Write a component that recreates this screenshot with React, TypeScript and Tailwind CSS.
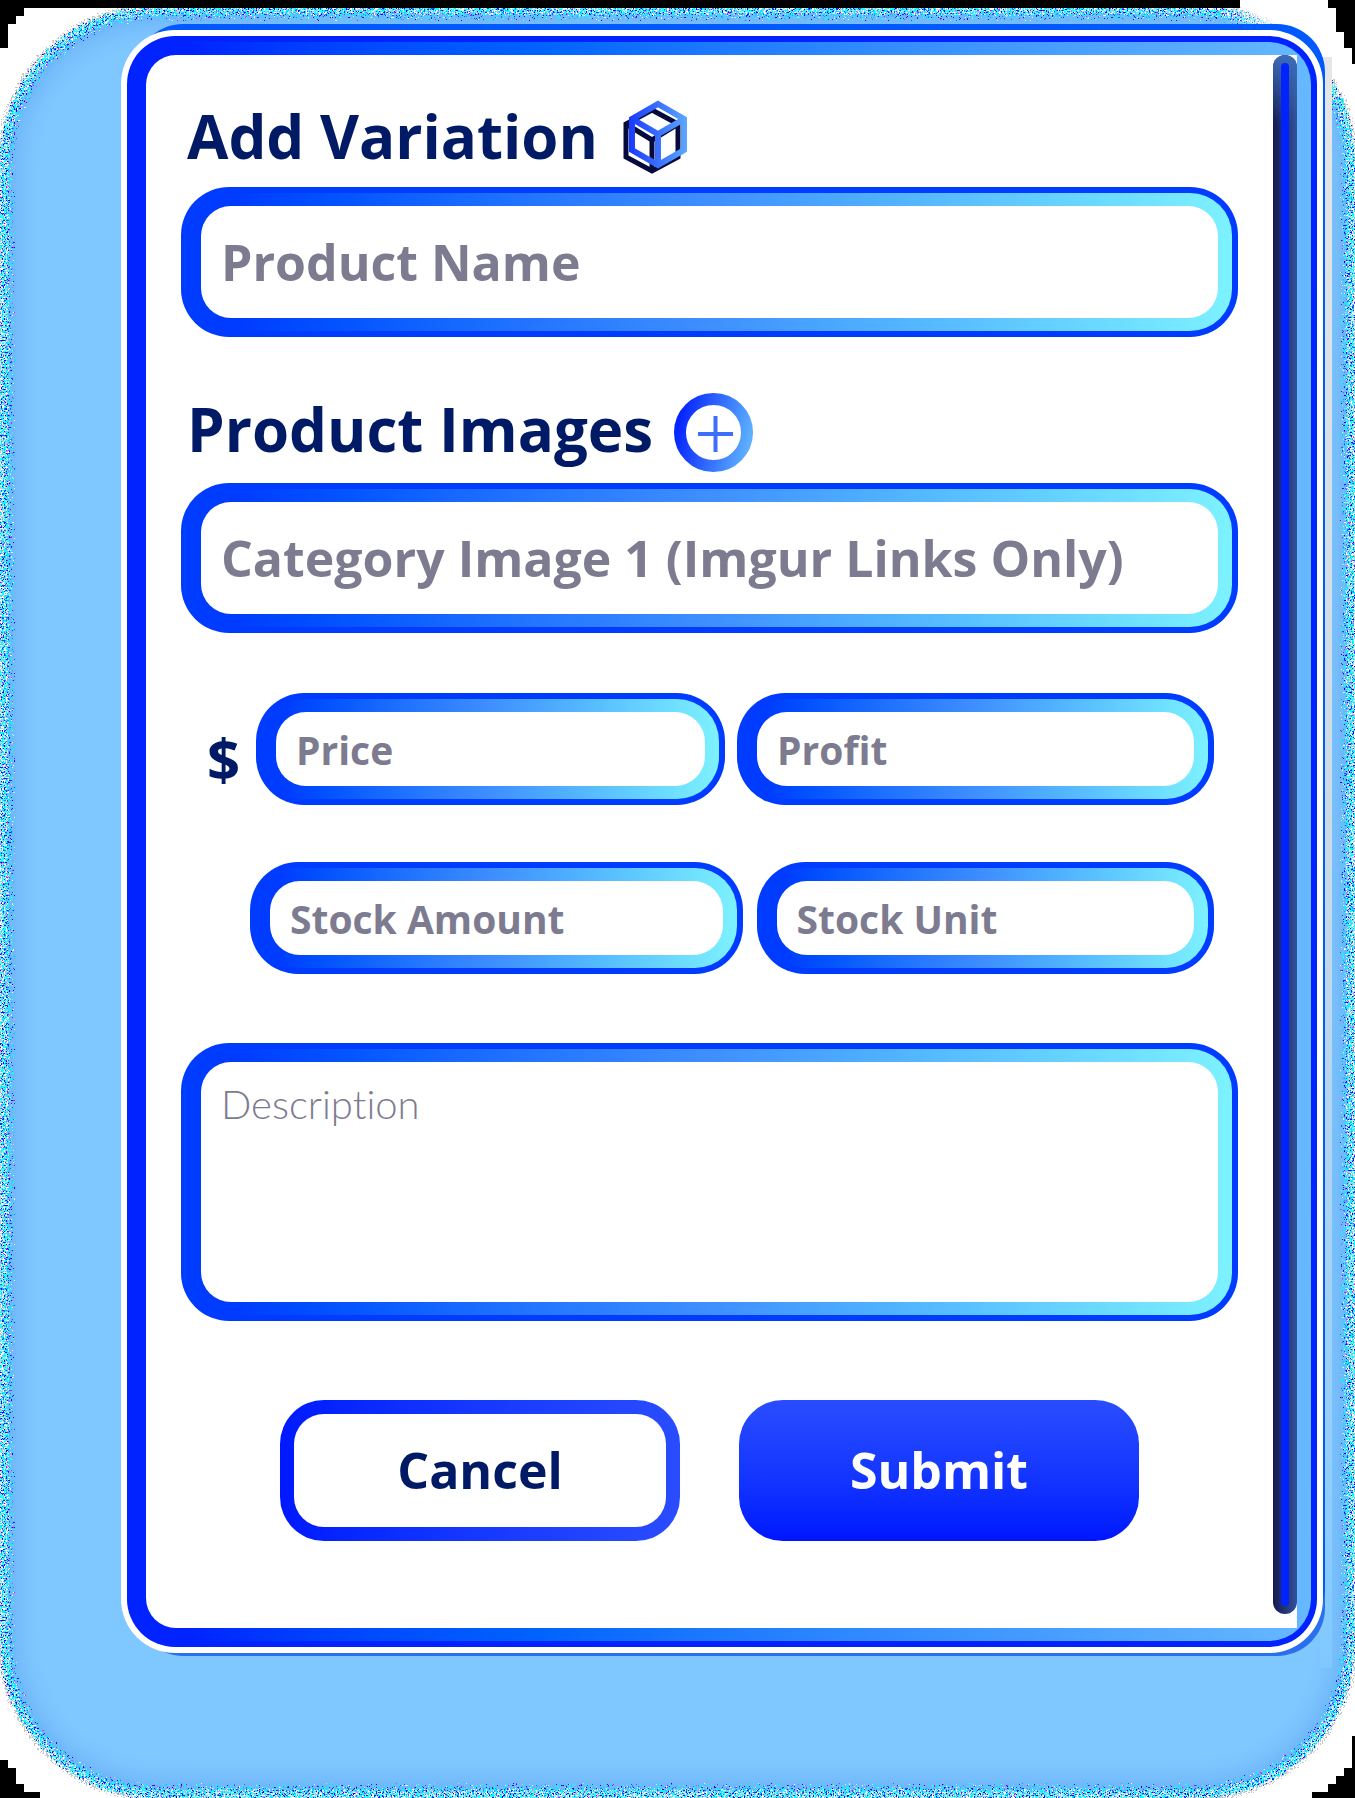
import React from "react";

const fieldText =
  "w-full min-w-0 bg-white px-5 font-['Open_Sans',sans-serif] font-bold text-[#7d7b90] outline-none placeholder:text-[#7d7b90] placeholder:opacity-100";

function Frame({ children, className = "" }: { children: React.ReactNode; className?: string }) {
  return (
    <div className={`min-w-0 rounded-[48px] bg-[#003cff] p-[6px] ${className}`}>
      <div className="rounded-[42px] bg-linear-to-r from-[#003cff] from-5% via-[#3f8fff] via-50% to-[#7df2ff] px-[14px] py-[13px]">
        {children}
      </div>
    </div>
  );
}

function LargeField({ label }: { label: string }) {
  return (
    <Frame>
      <input aria-label={label} placeholder={label} className={`${fieldText} block h-28 rounded-[30px] text-[50px]`} />
    </Frame>
  );
}

function SmallField({ label, className }: { label: string; className: string }) {
  return (
    <Frame className={className}>
      <input aria-label={label} placeholder={label} className={`${fieldText} block h-[74px] rounded-[30px] text-[39px]`} />
    </Frame>
  );
}

function BoxIcon() {
  return (
    <svg viewBox="0 0 66 76" className="h-[76px] w-[66px]" fill="none" aria-hidden="true">
      <defs>
        <linearGradient id="cube" gradientUnits="userSpaceOnUse" x1="8" y1="0" x2="64" y2="0">
          <stop offset="0" stopColor="#1a3dff" />
          <stop offset="1" stopColor="#5ba8ff" />
        </linearGradient>
      </defs>
      <g stroke="#050a3c" strokeWidth="5">
        <path d="M29 10 55 24V57L29 71 3 57V24Z" />
        <path d="M3 24 29 40 55 24M29 40V71" />
      </g>
      <g stroke="url(#cube)" strokeWidth="6">
        <path d="M35 4 61 19V50L35 65 9 50V19Z" />
        <path d="M9 19 35 34 61 19M35 34V65" />
      </g>
    </svg>
  );
}

function PlusIcon() {
  return (
    <svg viewBox="0 0 79 79" className="size-[79px]" fill="none" aria-hidden="true">
      <defs>
        <linearGradient id="ring" gradientUnits="userSpaceOnUse" x1="4" y1="30" x2="76" y2="46">
          <stop offset="0" stopColor="#0524ff" />
          <stop offset="1" stopColor="#5cb0ff" />
        </linearGradient>
      </defs>
      <circle cx="39.5" cy="39.5" r="33.5" stroke="url(#ring)" strokeWidth="12" />
      <path d="M24 41H59M41.5 23V59" stroke="#3d6ff8" strokeWidth="4" />
    </svg>
  );
}

function Backdrop() {
  return (
    <div className="absolute inset-0 overflow-hidden bg-white" aria-hidden="true">
      <svg className="absolute size-0">
        <defs>
          <filter id="grain" x="-3%" y="-3%" width="106%" height="106%" colorInterpolationFilters="sRGB">
            <feGaussianBlur in="SourceAlpha" stdDeviation="8" result="soft" />
            <feTurbulence type="fractalNoise" baseFrequency="0.6" numOctaves="2" seed="4" result="noise" />
            <feColorMatrix in="noise" values="0 0 0 0 0  0 0 0 0 0  0 0 0 0 0  2.4 0 0 0 -0.7" result="grainA" />

            <feComposite in="soft" in2="grainA" operator="arithmetic" k1="6" result="haloSum" />
            <feComponentTransfer in="haloSum" result="haloCut">
              <feFuncA type="discrete" tableValues="0 1" />
            </feComponentTransfer>
            <feFlood floodColor="#c8c8c8" />
            <feComposite in2="haloCut" operator="in" result="halo" />

            <feComposite in="soft" in2="grainA" operator="arithmetic" k2="2.4" k3="1" k4="-1.1" result="sum" />
            <feComponentTransfer in="sum" result="cut">
              <feFuncA type="discrete" tableValues="0 1" />
            </feComponentTransfer>
            <feFlood floodColor="#7fd8ff" />
            <feComposite in2="cut" operator="in" result="edge" />
            <feComposite in="SourceGraphic" in2="cut" operator="in" result="body" />

            <feColorMatrix in="noise" values="0 0 6 0 -3.2  0 7 0 0 -2.4  0 0 0 0 1  0 0 0 0 1" result="speckColor" />
            <feComponentTransfer in="soft" result="ring">
              <feFuncA type="table" tableValues="0 0.15 0.5 0.9 1 0.9 0.7 0.55 0.45 0.3 0" />
            </feComponentTransfer>
            <feComposite in="ring" in2="grainA" operator="arithmetic" k1="1.5" result="ringSum" />
            <feComponentTransfer in="ringSum" result="ringCut">
              <feFuncA type="discrete" tableValues="0 1" />
            </feComponentTransfer>
            <feComposite in="speckColor" in2="ringCut" operator="in" result="specks" />
            <feMerge>
              <feMergeNode in="halo" />
              <feMergeNode in="edge" />
              <feMergeNode in="body" />
              <feMergeNode in="specks" />
            </feMerge>
          </filter>
        </defs>
      </svg>
      <div className="absolute top-[12px] right-[6px] bottom-[6px] left-[6px] rounded-[150px] bg-[#7fc8ff] shadow-[inset_0_0_36px_#5a9cee] [filter:url(#grain)]" />
      <div className="absolute top-0 right-0 h-[57px] w-[130px] bg-linear-to-r from-transparent to-white to-50%" />
      <div className="absolute top-[57px] right-[23px] bottom-[130px] w-3 bg-linear-to-b from-[#e6e6e6] via-[#c9dae6] to-[#7fc8ff]" />
      <div className="absolute top-0 right-[115px] left-0 h-2 bg-black" />
      <svg viewBox="0 0 40 48" className="absolute top-0 left-0 h-12 w-10" shapeRendering="crispEdges">
        <path d="M0 0H40V8H24V16H16V24H8V48H0Z" />
      </svg>
      <svg viewBox="0 0 27 64" className="absolute top-0 right-0 h-16 w-[27px]" shapeRendering="crispEdges">
        <path d="M0 0H27V64H24V48H16V32H8V8H0Z" />
      </svg>
      <svg viewBox="0 0 40 38" className="absolute bottom-0 left-0 h-[38px] w-10" shapeRendering="crispEdges">
        <path d="M0 0H8V8H16V24H24V32H40V38H0Z" />
      </svg>
      <svg viewBox="0 0 43 62" className="absolute right-0 bottom-0 h-[62px] w-[43px]" shapeRendering="crispEdges">
        <path d="M43 0H40V32H32V40H24V48H16V56H0V62H43Z" />
      </svg>
    </div>
  );
}

const headingClass = "font-['Open_Sans',sans-serif] text-[60px] leading-[80px] font-bold whitespace-nowrap text-[#001a66]";

export default function App() {
  return (
    <main className="relative min-h-screen pt-[30px] pr-[32px] pb-36 pl-[121px]">
      <Backdrop />
      <div className="relative rounded-[54px] bg-white p-[6px] shadow-[8px_-12px_0_-6px_#0058ff,8px_9px_0_-6px_#2a70ee]">
        <div className="rounded-[48px] bg-[#0023ff] p-[6px] pl-[5px]">
          <div className="rounded-[42px] bg-linear-to-r from-[#0023ff] from-5% to-[#66b8ff] px-[14px] py-[13px]">
            <div className="flex rounded-l-[30px] bg-white">
              <form className="min-w-0 flex-1 px-[35px] pt-[41px] pb-[87px]" onSubmit={(e) => e.preventDefault()}>
                <div className="mb-[11px] flex h-20 items-center gap-[25px] pl-[6px]">
                  <h1 className={headingClass}>Add Variation</h1>
                  <div className="pt-1">
                    <BoxIcon />
                  </div>
                </div>
                <LargeField label="Product Name" />

                <div className="mt-[52px] mb-[14px] flex h-20 items-center gap-[21px] pl-[6px]">
                  <h2 className={headingClass}>Product Images</h2>
                  <button type="button" aria-label="Add image" className="mt-[6px] rounded-full">
                    <PlusIcon />
                  </button>
                </div>
                <LargeField label="Category Image 1 (Imgur Links Only)" />

                <div className="mt-[60px] flex items-center pr-6 pl-[26px]">
                  <span className="w-[49px] pt-5 font-['Open_Sans',sans-serif] text-[58px] leading-[74px] font-bold text-[#001a66]">
                    $
                  </span>
                  <div className="flex min-w-0 flex-1 gap-3">
                    <SmallField label="Price" className="flex-[469]" />
                    <SmallField label="Profit" className="flex-[477]" />
                  </div>
                </div>

                <div className="mt-[57px] flex gap-[14px] pr-6 pl-[69px]">
                  <SmallField label="Stock Amount" className="flex-[493]" />
                  <SmallField label="Stock Unit" className="flex-[457]" />
                </div>

                <div className="mt-[69px]">
                  <Frame>
                    <textarea
                      aria-label="Description"
                      placeholder="Description"
                      className="block h-60 w-full resize-none rounded-[30px] bg-white px-5 pt-[18px] font-[Lato,sans-serif] text-[40px] leading-[48px] font-light text-[#7d7b90] outline-none [font-variant-ligatures:none] placeholder:text-[#7d7b90] placeholder:opacity-100"
                    />
                  </Frame>
                </div>

                <div className="mt-[79px] flex justify-center gap-[59px]">
                  <button type="button" className="w-[400px] rounded-[44px] bg-linear-to-r from-[#0018ff] to-[#2a4cff] p-[14px]">
                    <span className="flex h-[113px] items-center justify-center rounded-[30px] bg-white font-['Open_Sans',sans-serif] text-[50px] font-bold text-[#001a66]">
                      Cancel
                    </span>
                  </button>
                  <button
                    type="submit"
                    className="h-[141px] w-[400px] rounded-[44px] bg-linear-to-b from-[#2a4cff] to-[#0014ff] font-['Open_Sans',sans-serif] text-[50px] font-bold text-white"
                  >
                    Submit
                  </button>
                </div>
              </form>
              <div className="mb-[14px] flex w-6 justify-center rounded-full bg-linear-to-r from-[#121a50] to-[#34529a]">
                <div className="flex w-6 justify-center rounded-full bg-[linear-gradient(to_bottom,#3c6cb8,transparent_70px)] py-2">
                  <div className="w-2 rounded-full bg-[#0023ff]" />
                </div>
              </div>
            </div>
          </div>
        </div>
      </div>
    </main>
  );
}
